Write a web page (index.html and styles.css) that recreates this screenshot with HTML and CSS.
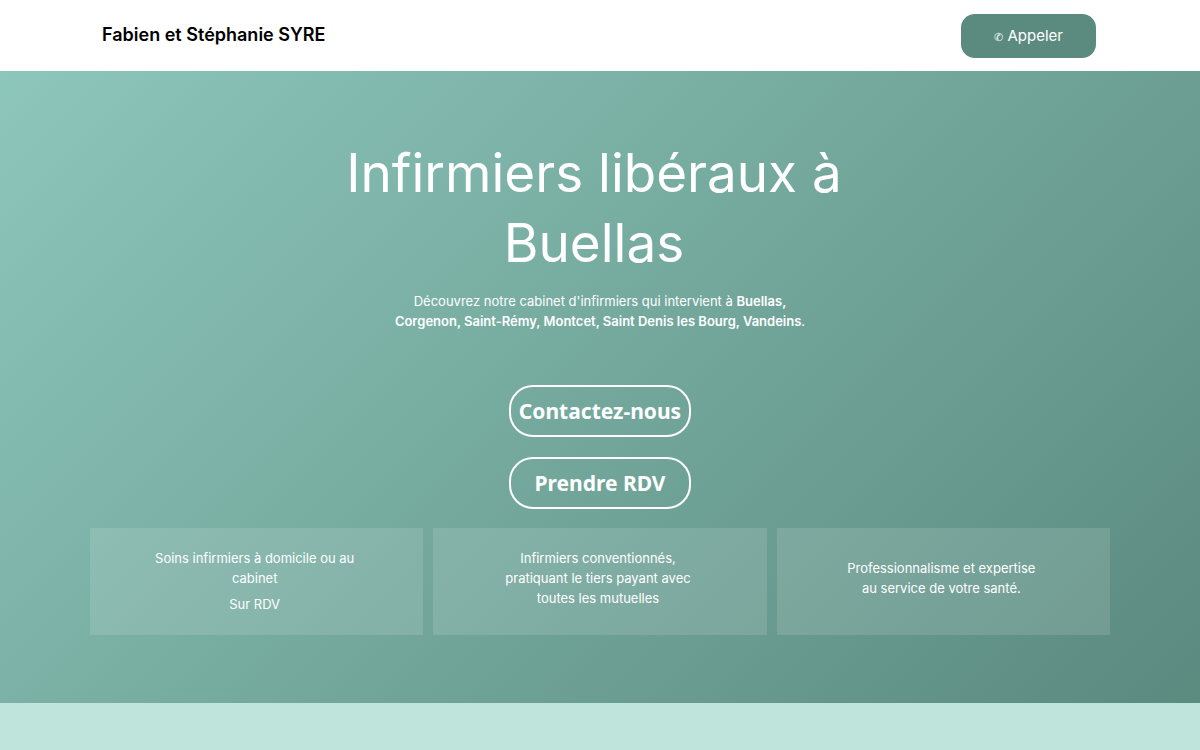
FILE: index.html
```html
<!DOCTYPE html>
<html lang="fr">
<head>
  <meta charset="UTF-8">
  <meta name="viewport" content="width=device-width, initial-scale=1.0">
  <title>Fabien et Stéphanie SYRE</title>
  <link rel="stylesheet" href="styles.css">
</head>
<body>
  <header class="header">
    <a class="brand" href="#">Fabien et Stéphanie SYRE</a>
    <a class="call" href="#"><span class="call-icon">✆</span> Appeler</a>
  </header>

  <main class="hero">
    <h1>Infirmiers libéraux à Buellas</h1>
    <p class="intro">Découvrez notre cabinet d'infirmiers qui intervient à <strong>Buellas, Corgenon, Saint-Rémy, Montcet, Saint Denis les Bourg, Vandeins</strong>.</p>

    <div class="actions">
      <button class="btn" type="button">Contactez-nous</button>
      <button class="btn" type="button">Prendre RDV</button>
    </div>

    <div class="cards">
      <div class="card">
        <p>Soins infirmiers à domicile ou au cabinet</p>
        <p>Sur RDV</p>
      </div>
      <div class="card">
        <p>Infirmiers conventionnés, pratiquant le tiers payant avec toutes les mutuelles</p>
      </div>
      <div class="card">
        <p>Professionnalisme et expertise au service de votre santé.</p>
      </div>
    </div>
  </main>
</body>
</html>
```
FILE: styles.css
```css
* {
  box-sizing: border-box;
}
body {
  margin: 0;
  min-height: 100vh;
  font-family: Inter, "Liberation Sans", sans-serif;
  font-size: 13px;
  line-height: 20px;
  color: #fff;
  background: #bfe4db;
}
h1, p {
  margin: 0;
}
a {
  text-decoration: none;
}

.header {
  display: flex;
  justify-content: space-between;
  align-items: flex-start;
  padding: 14px 104px 13px 102px;
  background: #fff;
}
.brand {
  padding-top: 8px;
  font-size: 18px;
  line-height: 26px;
  font-weight: 600;
  color: #000;
}
.call {
  padding: 10px 33px;
  font-size: 15px;
  line-height: 24px;
  color: #fff;
  background: #5b8a7f;
  border-radius: 14px;
}
.call-icon {
  font-size: 11px;
  line-height: 1;
}

.hero {
  display: flex;
  flex-direction: column;
  align-items: center;
  padding: 67px 20px 68px;
  text-align: center;
  background: linear-gradient(135deg, #8dc6bb, #5b8a7f);
}
h1 {
  max-width: 600px;
  padding-right: 12px;
  font-size: 53px;
  line-height: 70px;
  font-weight: 400;
}
.intro {
  max-width: 430px;
  margin-top: 13px;
}
.intro strong {
  font-weight: 600;
}

.actions {
  display: flex;
  flex-direction: column;
  align-items: center;
  gap: 20px;
  margin: 54px 0 19px;
}
.btn {
  min-width: 182px;
  padding: 10px 8px;
  font-family: "Noto Sans", sans-serif;
  font-size: 21px;
  line-height: 28px;
  font-weight: 700;
  color: #fff;
  background: none;
  border: 2px solid #fff;
  border-radius: 24px;
}

.cards {
  display: grid;
  grid-template-columns: repeat(3, 1fr);
  gap: 10px;
  width: 100%;
  max-width: 1020px;
}
.card {
  display: flex;
  flex-direction: column;
  justify-content: center;
  gap: 6px;
  padding: 20px 66px 21px 62px;
  background: rgba(255, 255, 255, 0.12);
}
.card p:only-child {
  margin-bottom: 6px;
}
```
